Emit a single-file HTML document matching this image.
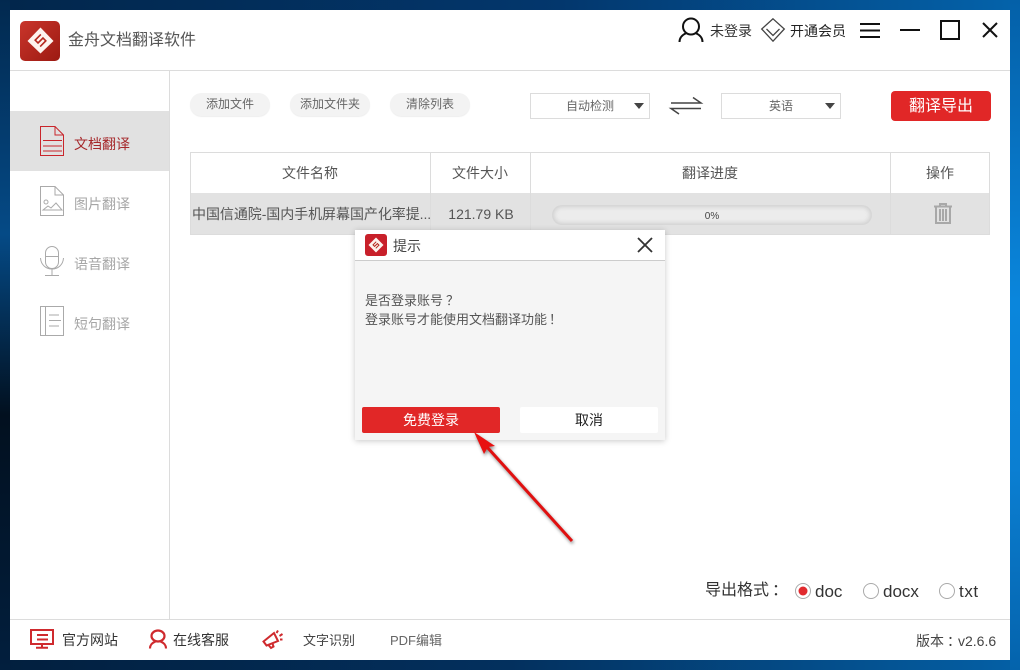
<!DOCTYPE html>
<html lang="zh"><head><meta charset="utf-8"><title>金舟文档翻译软件</title>
<style>
*{box-sizing:border-box;margin:0;padding:0}
html,body{width:1020px;height:670px;overflow:hidden}
body{position:relative;font-family:"Liberation Sans","Noto Sans CJK SC",sans-serif;background:#03264a;}
.bg{position:absolute;left:0;top:0;width:1020px;height:670px}
.win{position:absolute;left:10px;top:10px;width:1000px;height:650px;background:#fff}
.a{position:absolute;white-space:nowrap}
.c{text-align:center}
.ln{position:absolute;background:#dcdcdc}
.pill{position:absolute;top:93px;height:23px;border-radius:12px;background:#f3f3f3;box-shadow:0 1px 1px #eee;font-size:12px;line-height:22px;color:#666;text-align:center}
.sel{position:absolute;top:93px;height:26px;border:1px solid #dcdcdc;background:#fff;font-size:12px;line-height:24px;color:#666;text-align:center}
.tri{position:absolute;width:0;height:0;border-left:5px solid transparent;border-right:5px solid transparent;border-top:6px solid #444}
.p{position:relative}
svg{position:absolute;overflow:visible}
</style></head><body>
<svg class="bg" style="left:0;top:0" width="1020" height="670"><defs>
<linearGradient id="t" x1="0" x2="1" y1="0" y2="0"><stop offset="0" stop-color="#02264b"/><stop offset=".55" stop-color="#03376d"/><stop offset="1" stop-color="#0463ab"/></linearGradient>
<linearGradient id="b" x1="0" x2="1" y1="0" y2="0"><stop offset="0" stop-color="#021f3e"/><stop offset=".5" stop-color="#03305e"/><stop offset="1" stop-color="#0460a6"/></linearGradient>
<linearGradient id="r" x1="0" x2="0" y1="0" y2="1"><stop offset="0" stop-color="#0460a8"/><stop offset=".45" stop-color="#0a86dc"/><stop offset=".7" stop-color="#0b7fd2"/><stop offset="1" stop-color="#0463ac"/></linearGradient>
<linearGradient id="l" x1="0" x2="0" y1="0" y2="1"><stop offset="0" stop-color="#02294f"/><stop offset=".35" stop-color="#054a86"/><stop offset=".62" stop-color="#02101f"/><stop offset="1" stop-color="#021f3e"/></linearGradient>
</defs>
<rect width="1020" height="10" fill="url(#t)"/><rect y="660" width="1020" height="10" fill="url(#b)"/>
<rect x="1010" y="0" width="10" height="670" fill="url(#r)"/><rect width="10" height="670" fill="url(#l)"/></svg>
<div class="win"></div>

<!-- header -->
<div class="a" style="left:20px;top:21px;width:40px;height:40px;border-radius:5px;background:linear-gradient(135deg,#c9352b,#9c1a12)"></div>
<svg style="left:20px;top:21px" width="40" height="40"><path d="M20.500 6.500 33.500 20 20.500 32.500 7.500 20Z" fill="#fdf3ee"/><g transform="translate(20.500,19.500) rotate(-45)"><path d="M4.500 -4H-3.500V0H3.500V4H-4.500" fill="none" stroke="#b4271d" stroke-width="1.600"/></g></svg>
<div class="a" style="left:68px;top:31px;font-size:16px;line-height:20px;color:#555">金舟文档翻译软件</div>
<svg style="left:678px;top:17px" width="26" height="26" fill="none" stroke="#111" stroke-width="2"><ellipse cx="13" cy="9.500" rx="8" ry="8"/><path d="M1.500 25C1.500 20 5 17.500 8.500 16M24.500 25C24.500 20 21 17.500 17.500 16"/></svg>
<div class="a" style="left:710px;top:22px;font-size:14px;line-height:18px;color:#333;letter-spacing:0">未登录</div>
<svg style="left:761px;top:18px" width="24" height="24" fill="none" stroke="#444" stroke-width="1.300"><path d="M12 .8 23.300 11 12 23.200 .7 11Z"/><path d="M5.500 11 12 17.500 18.500 11"/></svg>
<div class="a" style="left:790px;top:22px;font-size:14px;line-height:18px;color:#222">开通会员</div>
<svg style="left:860px;top:22px" width="22" height="16" stroke="#111" stroke-width="2"><path d="M0 2H20M0 8.500H20M0 15H20"/></svg>
<svg style="left:900px;top:20px" width="20" height="20" stroke="#111" stroke-width="2"><path d="M0 10H20"/></svg>
<svg style="left:940px;top:20px" width="20" height="20" fill="none" stroke="#111" stroke-width="2"><rect x="1" y="1" width="18" height="18"/></svg>
<svg style="left:982px;top:22px" width="16" height="16" stroke="#111" stroke-width="2"><path d="M1 1 15 15M15 1 1 15"/></svg>
<div class="ln" style="left:10px;top:70px;width:1000px;height:1px"></div>

<!-- sidebar -->
<div class="ln" style="left:169px;top:71px;width:1px;height:548px"></div>
<div class="a" style="left:10px;top:111px;width:159px;height:60px;background:#e1e1e1"></div>
<svg style="left:40px;top:126px" width="24" height="30" fill="none" stroke="#c9252b" stroke-width="1"><path d="M.5.500H15L23.500 9V29.500H.5ZM15 .5V9H23.500M3 14.500H22M3 20H22M3 25H22"/></svg>
<div class="a" style="left:74px;top:135px;font-size:14px;line-height:18px;color:#a5272a">文档翻译</div>
<svg style="left:40px;top:186px" width="24" height="30" fill="none" stroke="#aaa" stroke-width="1"><path d="M.5.500H15L23.500 9V29.500H.5ZM15 .5V9H23.500"/><circle cx="6" cy="16" r="2"/><path d="M3 24 8 20 11 22 16 17 22 24Z"/></svg>
<div class="a" style="left:74px;top:195px;font-size:14px;line-height:18px;color:#a6a6a6">图片翻译</div>
<svg style="left:40px;top:246px" width="24" height="30" fill="none" stroke="#aaa" stroke-width="1"><rect x="5.500" y=".5" width="13" height="22" rx="6.500"/><path d="M5.500 10.500H18.500M.5 12C1 19 6 23 12 23S23 19 23.500 12M12 23V29.500M5 29.500H19"/></svg>
<div class="a" style="left:74px;top:255px;font-size:14px;line-height:18px;color:#a6a6a6">语音翻译</div>
<svg style="left:40px;top:306px" width="24" height="30" fill="none" stroke="#aaa" stroke-width="1"><path d="M.5.500H23.500V29.500H.5ZM5.500 .5V29.500M9 9H19M9 14.500H21M9 20H19"/></svg>
<div class="a" style="left:74px;top:315px;font-size:14px;line-height:18px;color:#a6a6a6">短句翻译</div>

<!-- toolbar -->
<div class="pill" style="left:190px;width:80px">添加文件</div>
<div class="pill" style="left:290px;width:80px">添加文件夹</div>
<div class="pill" style="left:390px;width:80px">清除列表</div>
<div class="sel" style="left:530px;width:120px;padding-right:0"><span style="position:relative;left:0">自动检测</span></div>
<div class="tri" style="left:634px;top:103px"></div>
<svg style="left:670px;top:97px" width="32" height="18" fill="none" stroke="#444" stroke-width="1.500"><path d="M1 6H31L23 .5M31 11.500H1L9 17"/></svg>
<div class="sel" style="left:721px;width:120px"><span>英语</span></div>
<div class="tri" style="left:825px;top:103px"></div>
<div class="a c" style="left:891px;top:91px;width:100px;height:30px;background:#e12727;border-radius:4px;color:#fff;font-size:16px;line-height:31px">翻译导出</div>

<!-- table -->
<div class="a" style="left:190px;top:152px;width:800px;height:83px;border:1px solid #dcdcdc;background:#fff"></div>
<div class="a" style="left:191px;top:193px;width:798px;height:41px;background:#e2e2e2"></div>
<div class="ln" style="left:430px;top:152px;width:1px;height:83px"></div>
<div class="ln" style="left:530px;top:152px;width:1px;height:83px"></div>
<div class="ln" style="left:890px;top:152px;width:1px;height:83px"></div>
<div class="a c" style="left:190px;top:164px;width:240px;font-size:14px;line-height:18px;color:#555">文件名称</div>
<div class="a c" style="left:430px;top:164px;width:100px;font-size:14px;line-height:18px;color:#555">文件大小</div>
<div class="a c" style="left:530px;top:164px;width:360px;font-size:14px;line-height:18px;color:#555">翻译进度</div>
<div class="a c" style="left:890px;top:164px;width:100px;font-size:14px;line-height:18px;color:#555">操作</div>
<div class="a" style="left:192px;top:205px;font-size:14px;line-height:18px;color:#555;letter-spacing:-.06px">中国信通院-国内手机屏幕国产化率提...</div>
<div class="a c" style="left:431px;top:205px;width:100px;font-size:14px;line-height:18px;color:#555">121.79 KB</div>
<div class="a c" style="left:552px;top:205px;width:320px;height:20px;border-radius:10px;background:#ececec;box-shadow:inset 0 0 4px 2px #d0d0d0;font-size:10px;line-height:21px;color:#444;padding-top:1px">0%</div>
<svg style="left:933px;top:203px" width="20" height="21" fill="none" stroke="#a8a8a8" stroke-width="2"><path d="M1 3.500H19M7 3.500V1H13V3.500M3 4V20H17V4M7 6V18M10 6V18M13 6V18"/></svg>

<!-- dialog -->
<div class="a" style="left:355px;top:230px;width:310px;height:210px;background:#f5f5f5;box-shadow:0 1px 6px rgba(0,0,0,.22)"></div>
<div class="a" style="left:355px;top:230px;width:310px;height:31px;background:#fff;border-bottom:1px solid #ccc"></div>
<div class="a" style="left:365px;top:234px;width:22px;height:22px;border-radius:3px;background:#c8202a"></div>
<svg style="left:365px;top:234px" width="22" height="22"><path d="M11 3.500 18.500 11 11 18.500 3.500 11Z" fill="#fdf3ee"/><g transform="translate(11,11) rotate(-45)"><path d="M2.500 -2.200H-2V0H2V2.200H-2.500" fill="none" stroke="#b4271d" stroke-width="1"/></g></svg>
<div class="a" style="left:393px;top:237px;font-size:14px;line-height:18px;color:#444">提示</div>
<svg style="left:637px;top:237px" width="16" height="16" stroke="#333" stroke-width="1.800"><path d="M1 1 15 15M15 1 1 15"/></svg>
<div class="a" style="left:365px;top:291px;font-size:13px;line-height:19px;color:#555">是否登录账号<span class="p" style="left:3px">？</span><br>登录账号才能使用文档翻译功能<span class="p" style="left:2px">！</span></div>
<div class="a c" style="left:362px;top:407px;width:138px;height:26px;background:#e12727;border-radius:2px;color:#fff;font-size:14px;line-height:27px">免费登录</div>
<div class="a c" style="left:520px;top:407px;width:138px;height:26px;background:#fff;border-radius:2px;color:#222;font-size:14px;line-height:27px">取消</div>
<svg style="left:0;top:0;filter:drop-shadow(1px 2px 1.500px rgba(0,0,0,.45))" width="1020" height="670"><path d="M572 541 487 447" stroke="#e01010" stroke-width="3" fill="none"/><path d="M474 432 495 446 488 447 484 454Z" fill="#e81010"/></svg>

<!-- format -->
<div class="a" style="left:705px;top:581px;font-size:16px;line-height:20px;color:#333">导出格式<span class="p" style="left:3px">：</span></div>
<svg style="left:794px;top:582px" width="180" height="18"><circle cx="9" cy="9" r="7.500" fill="#fff" stroke="#aaa"/><circle cx="9" cy="9" r="4.500" fill="#e12a2e"/><circle cx="77" cy="9" r="7.500" fill="#fff" stroke="#aaa"/><circle cx="153" cy="9" r="7.500" fill="#fff" stroke="#aaa"/></svg>
<div class="a" style="left:815px;top:582px;font-size:17px;line-height:20px;color:#333">doc</div>
<div class="a" style="left:883px;top:582px;font-size:17px;line-height:20px;color:#333">docx</div>
<div class="a" style="left:959px;top:582px;font-size:17px;line-height:20px;color:#333;letter-spacing:.6px">txt</div>

<!-- footer -->
<div class="ln" style="left:10px;top:619px;width:1000px;height:1px"></div>
<svg style="left:30px;top:629px" width="24" height="20" fill="none" stroke="#cf2a2e" stroke-width="2"><path d="M1 1H23V15H1ZM7 6H18M7 10.500H18M12 15V18.500M6 18.800H18"/></svg>
<div class="a" style="left:62px;top:631px;font-size:14px;line-height:18px;color:#333">官方网站</div>
<svg style="left:149px;top:629px" width="18" height="20" fill="none" stroke="#cf2a2e" stroke-width="2.200"><ellipse cx="9" cy="7" rx="6.500" ry="5.500"/><path d="M1 19.500C1 15 4 13.500 6.500 12.500M17 19.500C17 15 14 13.500 11.500 12.500"/></svg>
<div class="a" style="left:173px;top:631px;font-size:14px;line-height:18px;color:#333">在线客服</div>
<svg style="left:262px;top:630px" width="22" height="19" fill="none" stroke="#cf2a2e" stroke-width="2"><path d="M1.500 11.500 12 3 16 11 4.500 15.500ZM6.500 15 9 18 11.500 16.500 10.500 13.500M14.500 3 16 .5M17.500 6 20.500 4M18 9.500H20.500"/></svg>
<div class="a" style="left:303px;top:632px;font-size:13px;line-height:18px;color:#444">文字识别</div>
<div class="a" style="left:390px;top:632px;font-size:13px;line-height:18px;color:#666">PDF编辑</div>
<div class="a" style="left:916px;top:632px;font-size:14px;line-height:18px;color:#444">版本<span class="p" style="left:3px">：</span>v2.6.6</div>
</body></html>
